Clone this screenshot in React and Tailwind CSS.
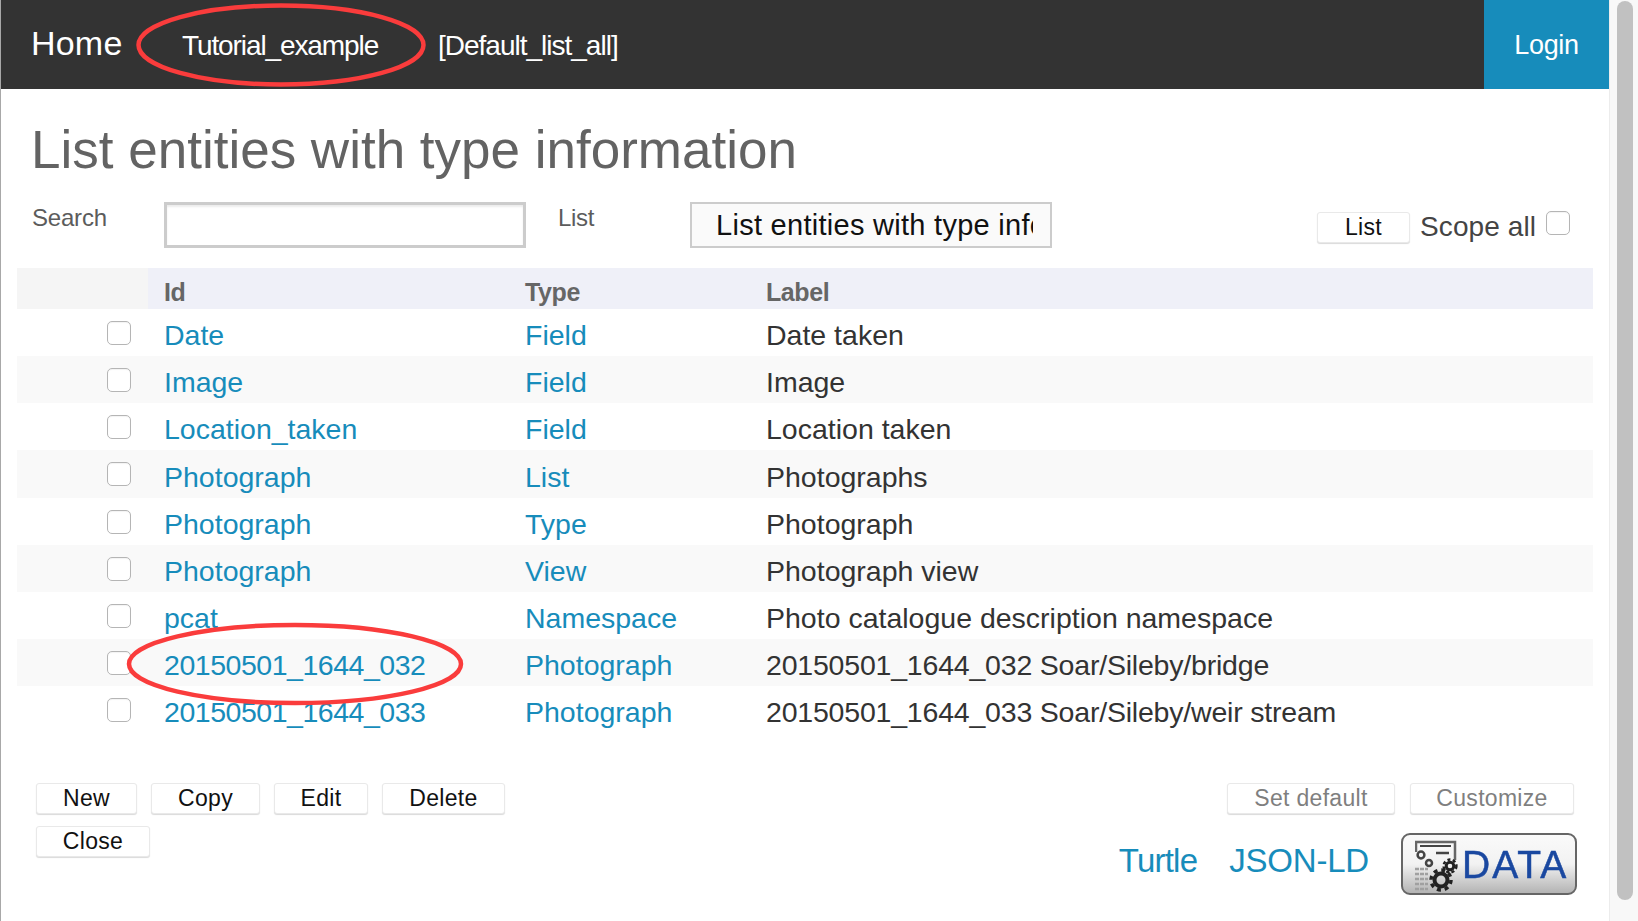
import React from "react";

const rows = [
  ["Date", "Field", "Date taken"],
  ["Image", "Field", "Image"],
  ["Location_taken", "Field", "Location taken"],
  ["Photograph", "List", "Photographs"],
  ["Photograph", "Type", "Photograph"],
  ["Photograph", "View", "Photograph view"],
  ["pcat", "Namespace", "Photo catalogue description namespace"],
  ["20150501_1644_032", "Photograph", "20150501_1644_032 Soar/Sileby/bridge"],
  ["20150501_1644_033", "Photograph", "20150501_1644_033 Soar/Sileby/weir stream"],
];

function Check({ className = "" }) {
  return <span className={"block w-[24px] h-[24px] rounded-[5px] border border-[#b5b5b5] bg-white shadow-[inset_0_1px_1px_rgba(0,0,0,0.05)] " + className} />;
}

function Btn({ children, w, muted }) {
  return (
    <button
      className={
        "h-[31px] pb-[1px] rounded-[3px] border border-[#e9e9e9] bg-white shadow-[0_1px_1px_rgba(0,0,0,0.15)] text-[23px] leading-[28px] tracking-[0.3px] text-center " +
        (muted ? "text-[#7f7f7f] " : "text-[#111] ") + w
      }
    >
      {children}
    </button>
  );
}

function DataLogo() {
  return (
    <div className="relative w-[176px] h-[62px] rounded-[9px] border-2 border-[#666] bg-gradient-to-b from-[#fafafa] via-[#f2f2f2] to-[#b4b4b4] flex items-center overflow-hidden">
      <svg width="46" height="58" viewBox="0 0 46 58" className="ml-[12px] shrink-0 blur-[0.5px]">
        <path d="M1 17V7H40V25" fill="none" stroke="#666" strokeWidth="2.5" />
        <path d="M5 11H36" stroke="#444" strokeWidth="2" />
        <path d="M21 18H34" stroke="#444" strokeWidth="2.5" />
        <circle cx="6" cy="20" r="3.4" fill="none" stroke="#444" strokeWidth="2.5" />
        <circle cx="14" cy="28" r="3" fill="none" stroke="#444" strokeWidth="2.5" />
        <path d="M0 34H13M0 39H13M0 44H13M0 49H13M0 54H13" stroke="#a0a0a0" strokeWidth="2.6" strokeDasharray="4 1" />
        <circle cx="26" cy="45" r="6.5" fill="none" stroke="#222" strokeWidth="4" />
        <circle cx="26" cy="45" r="10" fill="none" stroke="#222" strokeWidth="3.5" strokeDasharray="4 3.85" />
        <circle cx="35" cy="31" r="3.8" fill="none" stroke="#222" strokeWidth="3" />
        <circle cx="35" cy="31" r="6.4" fill="none" stroke="#222" strokeWidth="2.5" strokeDasharray="3 2.36" />
      </svg>
      <span className="text-[#1a48a0] text-[39px] leading-none ml-[1px] tracking-[2px] blur-[0.4px] [-webkit-text-stroke:0.5px_#1a48a0]">DATA</span>
    </div>
  );
}

export default function App() {
  return (
    <div className="relative h-[921px] w-[1638px] overflow-hidden bg-white flex [font-family:'Liberation_Sans',Arial,sans-serif]">
      <div className="w-[1609px] h-full border-l border-[#a8a8a8] flex flex-col">
        <nav className="h-[89px] bg-[#333333] flex items-center text-white shrink-0">
          <a className="ml-[30px] mb-[2px] text-[34px] tracking-[0.2px] w-[151px]">Home</a>
          <a className="mt-[2px] text-[28px] tracking-[-1.1px] w-[256px]">Tutorial_example</a>
          <a className="mt-[2px] text-[28px] tracking-[-1px]">[Default_list_all]</a>
          <a className="ml-auto h-full w-[125px] bg-[#178cbb] flex items-center justify-center text-[27px] tracking-[-0.3px] pt-[2px]">Login</a>
        </nav>

        <h1 className="ml-[30px] mt-[29px] text-[53px] leading-[64px] text-[#636363]">List entities with type information</h1>

        <div className="flex items-start mt-[20px] h-[66px] relative">
          <span className="ml-[31px] w-[132px] mt-[1px] text-[24px] leading-[30px] text-[#5c5c5c] tracking-[-0.2px]">Search</span>
          <input className="w-[362px] h-[46px] border-[3px] border-[#cccccc] bg-white shadow-[inset_0_2px_2px_rgba(0,0,0,0.08)]" />
          <span className="ml-[32px] w-[132px] mt-[1px] text-[24px] leading-[30px] text-[#5c5c5c] tracking-[-0.3px]">List</span>
          <select className="w-[362px] h-[46px] border-[2px] border-[#cccccc] bg-[#fafafa] pl-[24px] pr-[17px] pb-[1px] appearance-none rounded-none text-[29px] text-[#111] tracking-[0.28px]" defaultValue="all">
            <option value="all">List entities with type information</option>
          </select>
          <div className="ml-auto flex items-start mr-[39px]">
            <div className="mt-[10px]"><Btn w="w-[93px]">List</Btn></div>
            <span className="ml-[10px] mt-[9px] text-[28px] leading-[32px] text-[#444] tracking-[0.1px] w-[126px] whitespace-nowrap">Scope all</span>
            <Check className="mt-[9px]" />
          </div>
        </div>

        <div className="mx-[16px] flex h-[41px] shrink-0 text-[25px] font-bold text-[#666] tracking-[-0.4px]">
          <div className="w-[131px] bg-[#f5f5f5]" />
          <div className="flex-1 bg-[#eff0f8] flex items-end pb-[1px]">
            <span className="pl-[16px] w-[377px] leading-[32px]">Id</span>
            <span className="w-[241px] leading-[32px]">Type</span>
            <span className="leading-[32px]">Label</span>
          </div>
        </div>

        <div className="mx-[16px] flex flex-col">
          {rows.map((r, i) => (
            <div key={i} className={"flex items-center h-[47.125px] pt-[6px] text-[28.5px] " + (i % 2 === 1 ? "bg-[#f9f9f9]" : "bg-white")}>
              <div className="w-[131px] pl-[90px]"><Check className="-mt-[5px]" /></div>
              <a className={"pl-[16px] w-[377px] text-[#178cbb] whitespace-nowrap " + (i > 6 ? "tracking-[-0.47px]" : "")}>{r[0]}</a>
              <a className="w-[241px] text-[#178cbb]">{r[1]}</a>
              <span className={"text-[#333] whitespace-nowrap " + (i > 6 ? "tracking-[-0.2px]" : "")}>{r[2]}</span>
            </div>
          ))}
        </div>

        <div className="flex justify-between mt-[50px] relative">
          <div className="ml-[35px] w-[480px] flex flex-wrap content-start gap-x-[14px] gap-y-[12px]">
            <Btn w="w-[101px]">New</Btn>
            <Btn w="w-[109px]">Copy</Btn>
            <Btn w="w-[94px]">Edit</Btn>
            <Btn w="w-[123px]">Delete</Btn>
            <Btn w="w-[114px]">Close</Btn>
          </div>
          <div className="mr-[32px] flex flex-col items-end">
            <div className="flex gap-[15px] mr-[3px]">
              <Btn muted w="w-[168px]">Set default</Btn>
              <Btn muted w="w-[164px]">Customize</Btn>
            </div>
            <div className="flex items-center mt-[19px]">
              <a className="text-[#178cbb] text-[33px] tracking-[-0.8px] mb-[6px]">Turtle</a>
              <a className="text-[#178cbb] text-[33px] tracking-[-0.2px] ml-[32px] mr-[32px] mb-[6px]">JSON-LD</a>
              <DataLogo />
            </div>
          </div>
        </div>
      </div>

      <div className="w-[29px] h-full bg-[#f8f8f8] border-l border-[#ececec] pl-[7px] pt-[1px]">
        <div className="w-[16px] h-[899px] rounded-[8px] bg-[#c1c1c1]" />
      </div>

      <svg className="absolute left-0 top-0 pointer-events-none" width="1638" height="921" fill="none">
        <ellipse cx="281" cy="45" rx="142.5" ry="39.5" stroke="#fa3c3c" strokeWidth="4.5" />
        <ellipse cx="295" cy="664" rx="166" ry="39" stroke="#fa3c3c" strokeWidth="4.5" />
      </svg>
    </div>
  );
}
